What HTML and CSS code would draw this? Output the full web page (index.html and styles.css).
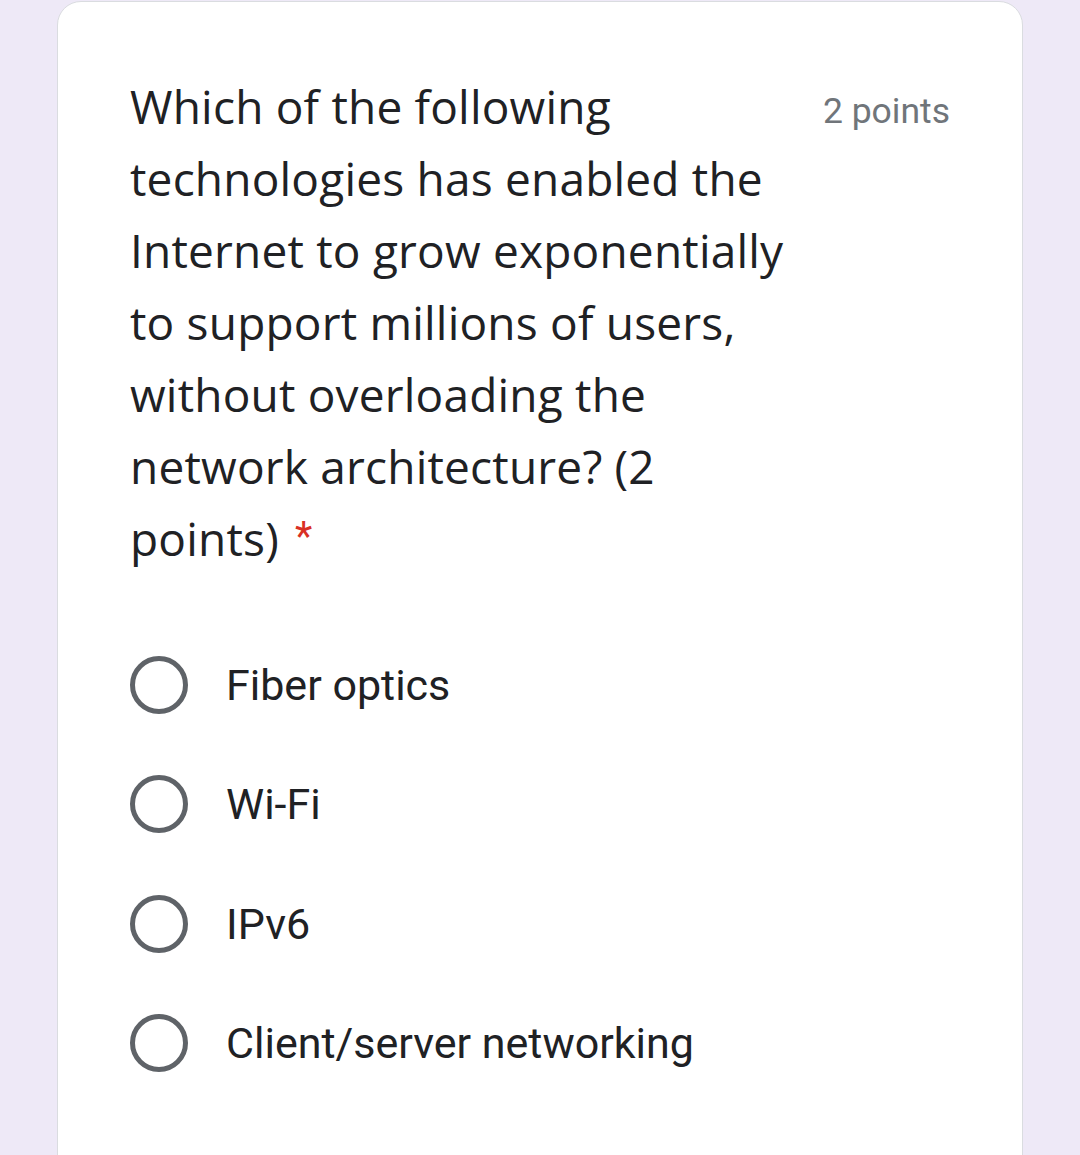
FILE: index.html
```html
<!DOCTYPE html>
<html lang="en">
<head>
<meta charset="utf-8">
<title>Question</title>
<link rel="stylesheet" href="styles.css">
</head>
<body>
<div class="card">
  <div class="header">
    <div class="question">Which of the following technologies has enabled the Internet to grow exponentially to support millions of users, without overloading the network architecture? (2 points)<span class="req">*</span></div>
    <div class="points">2 points</div>
  </div>
  <div class="options">
    <div class="option"><span class="radio"></span><span class="label">Fiber optics</span></div>
    <div class="option"><span class="radio"></span><span class="label">Wi-Fi</span></div>
    <div class="option"><span class="radio"></span><span class="label">IPv6</span></div>
    <div class="option"><span class="radio"></span><span class="label">Client/server networking</span></div>
  </div>
</div>
</body>
</html>
```
FILE: styles.css
```css
html, body {
  margin: 0;
  padding: 0;
}
body {
  background: #eee9f7;
  height: 1155px;
  overflow: hidden;
}
.card {
  margin: 1px 57px 0 57px;
  background: #ffffff;
  border: 1px solid #dadce0;
  border-radius: 24px;
  padding: 68px 72px 80px 72px;
  min-height: 1200px;
  box-sizing: border-box;
}
.header {
  display: flex;
  align-items: flex-start;
  gap: 30px;
}
.question {
  flex: 1;
  max-width: 660px;
  font-family: "Open Sans", sans-serif;
  font-size: 46px;
  line-height: 72px;
  color: #202124;
  letter-spacing: 0.2px;
}
.req {
  display: inline-block;
  font-family: Roboto, sans-serif;
  font-size: 40px;
  line-height: 40px;
  color: #d93025;
  margin-left: 16px;
  vertical-align: 6px;
}
.points {
  margin-left: auto;
  font-family: Roboto, sans-serif;
  font-size: 35.5px;
  line-height: 72px;
  color: #70757a;
  white-space: nowrap;
  padding-top: 5px;
}
.options {
  display: flex;
  flex-direction: column;
  margin-top: 51px;
}
.option {
  display: flex;
  align-items: center;
  height: 119.5px;
  gap: 38px;
}
.radio {
  width: 58px;
  height: 58px;
  box-sizing: border-box;
  border: 5.5px solid #5f6368;
  border-radius: 50%;
  flex: none;
}
.label {
  font-family: Roboto, sans-serif;
  font-size: 43px;
  color: #202124;
}
```
